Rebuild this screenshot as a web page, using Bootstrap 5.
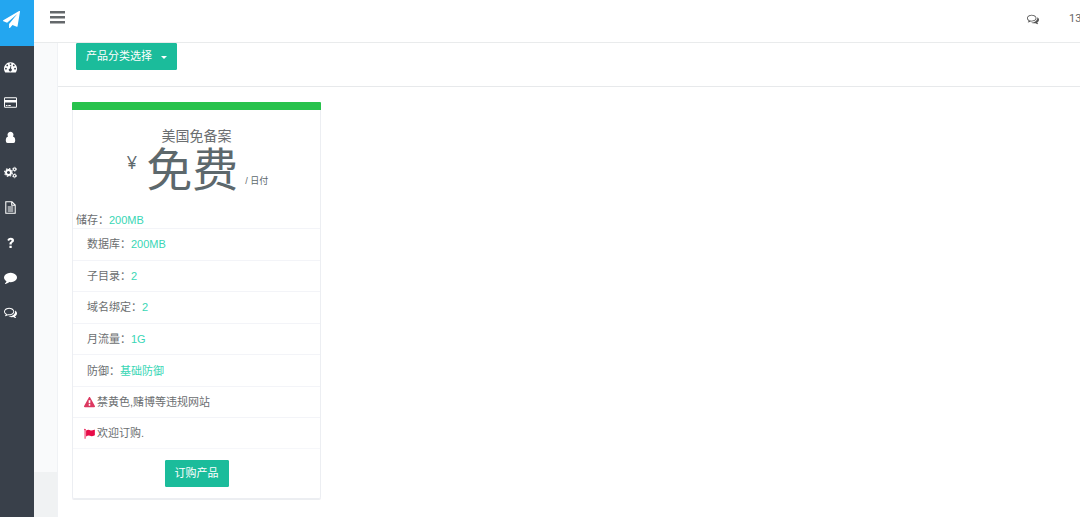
<!DOCTYPE html>
<html lang="zh-CN">
<head>
<meta charset="utf-8">
<meta name="viewport" content="width=device-width, initial-scale=1">
<title>产品订购</title>
<link rel="stylesheet" href="https://cdn.jsdelivr.net/npm/bootstrap@5.3.0/dist/css/bootstrap.min.css">
<style>
body{font-family:"Liberation Sans","Noto Sans CJK SC",sans-serif;font-size:11px;line-height:16px;color:#6b6e70;background:#fff}
svg{display:block;fill:currentColor}
svg.line-icon{fill:none;stroke:currentColor}
.side{width:34px;background:#39404a;color:#fff}
.brand{height:46px;background:#23a6f0;color:#fff;padding:11px 0 0 3px}
.side-nav{padding:4px 0 0 4px}
.side-nav a{height:35px;color:#fff}
.topbar{height:43px;border-bottom:1px solid #e9ebec;background:#fff;padding:0 0 4px 16px}
.toggler{color:#64686b;background:none}
.account{font:11px/16px Roboto,sans-serif;color:#666;width:11px;white-space:nowrap}
.alerts{color:#555;margin-right:30px}
.gutter{width:23px;background:#f9fafb}
.gutter-foot{height:45px;background:#f0f2f3}
.panel{border-left:1px solid #f0f2f5}
.filter{height:44px;padding-left:18px;border-bottom:1px solid #e7e9eb}
.btn-teal{--bs-btn-color:#fff;--bs-btn-bg:#1bbc9b;--bs-btn-border-color:#1bbc9b;--bs-btn-hover-color:#fff;--bs-btn-hover-bg:#16a085;--bs-btn-hover-border-color:#16a085;--bs-btn-font-size:11px;--bs-btn-line-height:17px;--bs-btn-padding-y:4px;--bs-btn-padding-x:9px;--bs-btn-border-radius:1px;line-height:17px}
.btn-teal.dropdown-toggle::after{margin-left:9px;vertical-align:1px;border-width:3px;border-bottom:0}
.plan{width:249px;margin:15px 14px;border:1px solid #eceef2;border-top:0;border-radius:2px;box-shadow:0 1px 0 #eceef1}
.plan-stripe{height:8px;background:#27c24c;margin:0 -1px;border-radius:1px 1px 0 0}
.plan-name{font-size:14px;line-height:20px;padding-top:16px;font-weight:400}
.price{height:63px;color:#5d686c;padding-left:2px}
.currency{font:18px/20px "Open Sans",sans-serif;padding-top:6px;margin-right:9px}
.amount{font-size:46px;line-height:48px}
.period{font-size:9px;line-height:12px;margin:29px 0 0 7px}
.storage{padding:3px 3px 0;height:19px}
.specs{display:grid;grid-auto-rows:1fr;min-height:221px}
.specs li{display:flex;align-items:center;border-top:1px solid #f3f4f8;padding-left:14px}
.specs li:last-child{border-bottom:1px solid #f6f7fa}
.specs .note{padding-left:11px;gap:2px}
.order{padding:11px 0}
.val{color:#39d6b5}
.warn{color:#dc3860}.flag{color:#e80c48}
</style>
</head>
<body>
<svg width="0" height="0" class="position-absolute" aria-hidden="true">
<symbol id="comments" viewBox="0 0 1792 1792"><path d="M704 384q-153 0-286 52t-211.5 141-78.5 191q0 82 53 158t149 132l97 56-35 84q34-20 62-39l44-31 53 10q78 14 153 14 153 0 286-52t211.5-141 78.5-191-78.5-191-211.5-141-286-52zm0-128q191 0 353.5 68.5t256.5 186.5 94 257-94 257-256.5 186.5-353.5 68.5q-86 0-176-16-124 88-278 128-36 9-86 16h-3q-11 0-20.5-8t-11.5-21q-1-3-1-6.500t.5-6.500 2-6l2.500-5 3.500-5.500 4-5 4.500-5 4-4.500q5-6 23-25t26-29.500 22.500-29 25-38.500 20.500-44q-124-72-195-177t-71-224q0-139 94-257t256.500-186.500 353.500-68.500zm822 1169q10 24 20.500 44t25 38.500 22.500 29 26 29.500 23 25q1 1 4 4.500t4.500 5 4 5 3.500 5.500l2.500 5 2 6 .5 6.500-1 6.500q-3 14-13 22t-22 7q-50-7-86-16-154-40-278-128-90 16-176 16-271 0-472-132 58 4 88 4 161 0 309-45t264-129q125-92 192-212t67-254q0-77-23-152 129 71 204 178t75 230q0 120-71 224.500t-195 176.500z"/></symbol>
</svg>
<div class="d-flex min-vh-100">
  <aside class="side flex-shrink-0">
    <a class="brand d-block" href="#" aria-label="首页"><svg width="17" height="17" viewBox="0 0 1792 1792"><path d="M1764 11q33 24 27 64l-256 1536q-5 29-32 45-14 8-31 8-11 0-24-5l-453-185-242 295q-18 23-49 23-13 0-22-4-19-7-30.500-23.500t-11.500-36.500v-349l864-1059-1069 925-395-162q-37-14-40-55-2-40 32-59l1664-960q15-9 32-9 20 0 36 11z"/></svg></a>
    <nav class="side-nav d-flex flex-column">
      <a class="d-flex align-items-center" href="#" aria-label="仪表盘"><svg width="13" height="13" viewBox="0 0 16 16"><path fill-rule="evenodd" d="M8 1.500a8 8 0 0 0-6.700 12.300q.2.400.7.400h12q.5 0 .7-.4A8 8 0 0 0 8 1.500zM8 2.700a1.100 1.100 0 1 1 0 2.200a1.100 1.100 0 0 1 0-2.200zM4 4.400a1.100 1.100 0 1 1 0 2.200a1.100 1.100 0 0 1 0-2.200zM12 4.400a1.100 1.100 0 1 1 0 2.200a1.100 1.100 0 0 1 0-2.200zM2.400 8.400a1.100 1.100 0 1 1 0 2.200a1.100 1.100 0 0 1 0-2.200zM13.600 8.400a1.100 1.100 0 1 1 0 2.200a1.100 1.100 0 0 1 0-2.200zM9 5.800L8.600 9.300a1.800 1.800 0 1 1-1.200-.2L8.100 5.700z"/></svg></a>
      <a class="d-flex align-items-center" href="#" aria-label="账单"><svg width="13" height="13" viewBox="0 0 16 16"><path fill-rule="evenodd" d="M1.500 1.500h13A1.500 1.500 0 0 1 16 3v10a1.500 1.500 0 0 1-1.500 1.500h-13A1.500 1.500 0 0 1 0 13V3a1.500 1.500 0 0 1 1.500-1.500zM1.200 2.800v2h13.600v-2zM1.200 8v5.300h13.600V8zM2.300 11h2v1.200h-2zM5.300 11h3v1.200h-3z"/></svg></a>
      <a class="d-flex align-items-center" href="#" aria-label="用户"><svg width="13" height="13" viewBox="0 0 16 16"><path d="M8 1a3.700 3.700 0 0 1 3 5.900q2.800.8 2.800 5.100 0 2.700-2.200 2.700H4.400Q2.200 14.700 2.200 12q0-4.300 2.800-5.100A3.700 3.700 0 0 1 8 1z"/></svg></a>
      <a class="d-flex align-items-center" href="#" aria-label="设置"><svg class="line-icon" width="13" height="13" viewBox="0 0 16 16"><circle cx="5.500" cy="8" r="3.100" stroke-width="2.400"/><circle cx="5.500" cy="8" r="4.800" stroke-width="1.400" stroke-dasharray="1.880 1.890"/><circle cx="13" cy="4" r="1.600" stroke-width="1.300"/><circle cx="13" cy="4" r="2.500" stroke-width="1" stroke-dasharray="1.300 1.300"/><circle cx="13" cy="12" r="1.600" stroke-width="1.300"/><circle cx="13" cy="12" r="2.500" stroke-width="1" stroke-dasharray="1.300 1.300"/></svg></a>
      <a class="d-flex align-items-center" href="#" aria-label="文档"><svg class="line-icon" width="13" height="13" viewBox="0 0 16 16" stroke-width="1.300"><path d="M2.200 1h7.600l4 4v10H2.200zM9.500 1v4.300h4.300M4.600 7.500h6.800M4.600 9.900h6.800M4.600 12.300h6.800"/></svg></a>
      <a class="d-flex align-items-center" href="#" aria-label="帮助"><svg width="13" height="13" viewBox="0 0 16 16"><path d="M6.700 12h2.800v2.700H6.700zM4 4.900Q5.400 2 8.300 2q4 0 4 3.400 0 1.700-1.600 2.700-1.200.7-1.200 1.500v.9H6.700V9.400q0-1.500 1.500-2.400 1.200-.6 1.200-1.400 0-1-1.300-1-.9 0-2 1.600z"/></svg></a>
      <a class="d-flex align-items-center" href="#" aria-label="消息"><svg width="13" height="13" viewBox="0 0 1792 1792"><path d="M1792 896q0 174-120 321.500t-326 233-450 85.500q-70 0-145-8-198 175-460 242-49 14-114 22-17 2-30.500-9t-17.500-29v-1q-3-4-.5-12t2-10 4.500-9.500l6-9 7-8.500 8-9q7-8 31-34.500t34.500-38 31-39.500 32.500-51 27-59 26-76q-157-89-247.500-220t-90.500-281q0-130 71-248.500t191-204.500 286-136.500 348-50.500q244 0 450 85.500t326 233 120 321.500z"/></svg></a>
      <a class="d-flex align-items-center" href="#" aria-label="工单"><svg width="13" height="13"><use href="#comments"/></svg></a>
    </nav>
  </aside>
  <div class="d-flex flex-column flex-grow-1 overflow-hidden">
    <header class="topbar d-flex align-items-center">
      <button type="button" class="toggler border-0 p-0 mb-1" aria-label="菜单"><svg width="15" height="13" viewBox="0 0 15 13"><path d="M0 0h15v2.500H0zM0 5h15v2.500H0zM0 10h15v2.500H0z"/></svg></button>
      <a class="alerts ms-auto" href="#" aria-label="消息"><svg width="12" height="12"><use href="#comments"/></svg></a>
      <span class="account">13</span>
    </header>
    <div class="d-flex flex-grow-1">
      <div class="gutter flex-shrink-0 d-flex flex-column justify-content-end"><div class="gutter-foot"></div></div>
      <main class="panel flex-grow-1">
        <div class="filter"><button type="button" class="btn btn-teal dropdown-toggle" data-bs-toggle="dropdown">产品分类选择</button></div>
        <section class="plan">
          <div class="plan-stripe"></div>
          <h2 class="plan-name text-center mb-0">美国免备案</h2>
          <div class="price d-flex justify-content-center">
            <span class="currency">¥</span><span class="amount">免费</span><span class="period">/ 日付</span>
          </div>
          <div class="storage">储存：<span class="val">200MB</span></div>
          <ul class="specs list-unstyled mb-0">
            <li>数据库：<span class="val">200MB</span></li>
            <li>子目录：<span class="val">2</span></li>
            <li>域名绑定：<span class="val">2</span></li>
            <li>月流量：<span class="val">1G</span></li>
            <li>防御：<span class="val">基础防御</span></li>
            <li class="note"><svg class="warn" width="11" height="11" viewBox="0 0 1792 1792"><path d="M1024 1375v-190q0-14-9.500-23.500t-22.500-9.500h-192q-13 0-22.500 9.500t-9.500 23.500v190q0 14 9.500 23.500t22.500 9.500h192q13 0 22.500-9.500t9.500-23.500zm-2-374l18-459q0-12-10-19-13-11-24-11h-220q-11 0-24 11-10 7-10 21l17 457q0 10 10 16.500t24 6.500h185q14 0 23.500-6.500t10.500-16.500zm-14-934l768 1408q35 63-2 126-17 29-46.500 46t-63.500 17h-1536q-34 0-63.500-17t-46.500-46q-37-63-2-126l768-1408q17-31 47-49t65-18 65 18 47 49z"/></svg><span>禁黄色,赌博等违规网站</span></li>
            <li class="note"><svg class="flag" width="11" height="11" viewBox="0 0 16 16"><path d="M.2 2.500a1.200 1.200 0 1 1 2 .9V15.500H.900V3.400zM3 3.800Q6 1.800 9 3.200q2 1 6-.8.800-.2.800.5v7.500q-4.500 2.500-7 1-2.500-1.200-5.800.8z"/></svg><span>欢迎订购.</span></li>
          </ul>
          <div class="order d-flex justify-content-center"><button type="button" class="btn btn-teal">订购产品</button></div>
        </section>
      </main>
    </div>
  </div>
</div>
<script src="https://cdn.jsdelivr.net/npm/bootstrap@5.3.0/dist/js/bootstrap.bundle.min.js"></script>
</body>
</html>
